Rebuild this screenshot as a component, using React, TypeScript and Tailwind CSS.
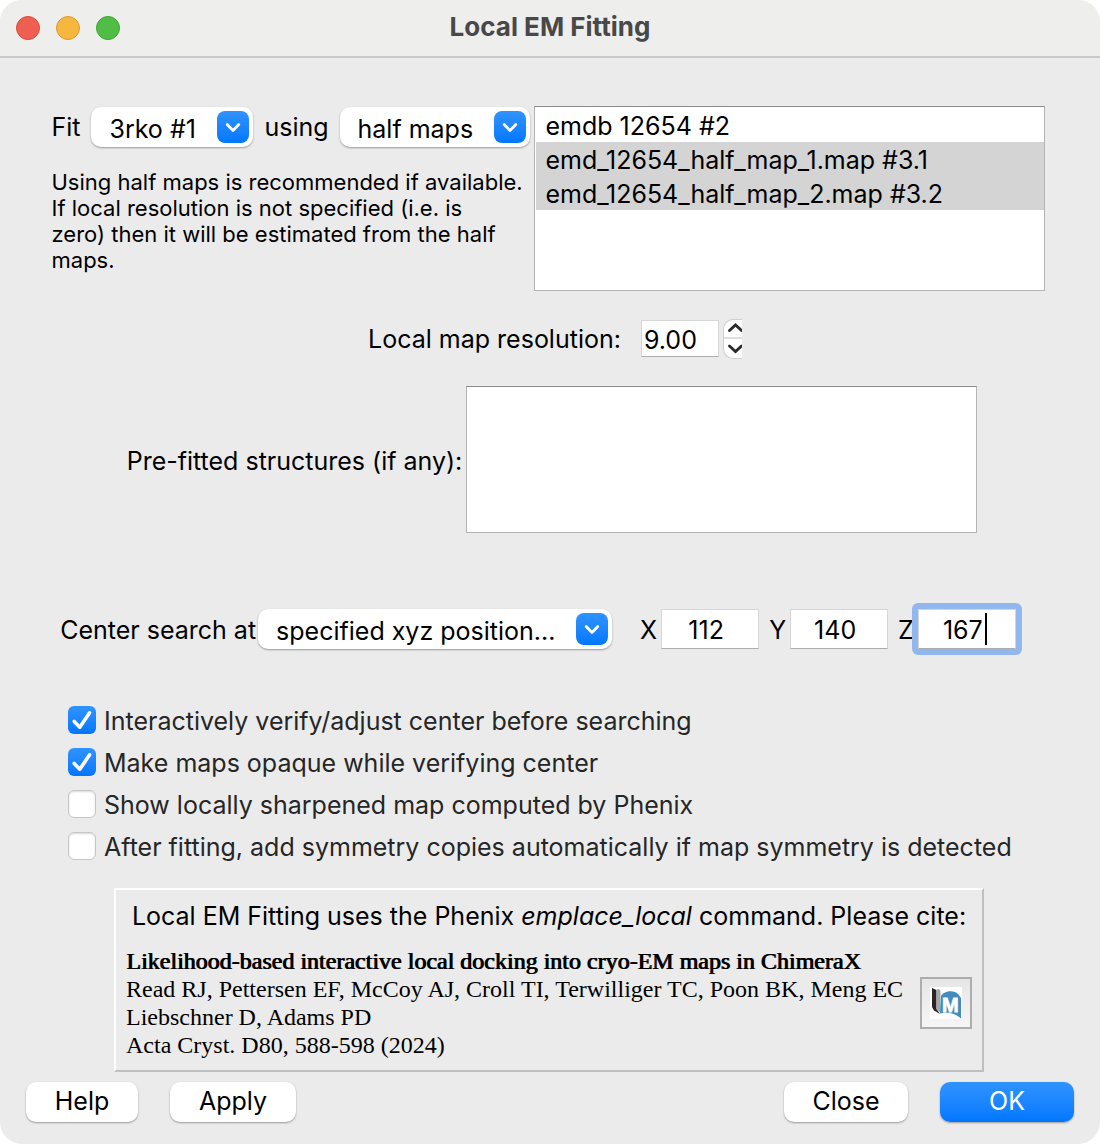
import { useState } from "react";
import type { ReactNode } from "react";

type PopupProps = {
  id: string;
  label: string;
  options: string[];
  className: string;
};

function PopupSelect({ id, label, options, className }: PopupProps) {
  return (
    <div className={`relative h-10 shrink-0 ${className}`}>
      <select
        id={id}
        aria-label={label}
        className="h-10 w-full appearance-none rounded-[10px] bg-white pt-1 pr-10 pl-[18px] text-black shadow-[0_1px_2px_rgba(0,0,0,0.35)] outline-none"
      >
        {options.map((option) => (
          <option key={option}>{option}</option>
        ))}
      </select>
      <span className="pointer-events-none absolute top-1 right-1 flex size-8 items-center justify-center rounded-lg bg-linear-to-b from-[#2f93ff] to-[#0077ff]">
        <svg width="16" height="16" viewBox="0 0 16 16" fill="none">
          <path d="M2.2 5.6 8 11.4 13.800 5.6" stroke="#fff" strokeWidth="2.8" strokeLinecap="round" strokeLinejoin="round" />
        </svg>
      </span>
    </div>
  );
}

type ButtonProps = {
  children: ReactNode;
  className: string;
};

function PushButton({ children, className }: ButtonProps) {
  return (
    <button
      type="button"
      className={`h-10 rounded-[10px] pb-[2px] shadow-[0_1px_2px_rgba(0,0,0,0.35)] ${className}`}
    >
      {children}
    </button>
  );
}

function CheckRow({ label, initial }: { label: string; initial: boolean }) {
  const [checked, setChecked] = useState(initial);

  return (
    <label className="flex h-[42px] items-center gap-2 text-[#262626]">
      <span className="relative size-7 shrink-0">
        <input
          type="checkbox"
          checked={checked}
          onChange={() => setChecked(!checked)}
          className="block size-7 appearance-none rounded-md border border-[#c6c6c6] bg-white shadow-[inset_0_1px_2px_rgba(0,0,0,0.15)] checked:border-0 checked:bg-linear-to-b checked:from-[#2f93ff] checked:to-[#0077ff] checked:shadow-none"
        />
        {checked && (
          <svg className="pointer-events-none absolute inset-0" width="28" height="28" viewBox="0 0 28 28" fill="none">
            <path d="M6.2 15.4 11.8 21.2 21.6 6.8" stroke="#fff" strokeWidth="3.6" strokeLinecap="round" strokeLinejoin="round" />
          </svg>
        )}
      </span>
      <span className="pt-[2px] whitespace-nowrap">{label}</span>
    </label>
  );
}

const coordClass =
  "h-10 w-[98px] border border-[#d6d6d6] border-b-[#adadad] bg-white pt-[2px] pr-2 text-center outline-none";

const maps = [
  "emdb 12654 #2",
  "emd_12654_half_map_1.map #3.1",
  "emd_12654_half_map_2.map #3.2",
];

const checks = [
  { label: "Interactively verify/adjust center before searching", initial: true },
  { label: "Make maps opaque while verifying center", initial: true },
  { label: "Show locally sharpened map computed by Phenix", initial: false },
  { label: "After fitting, add symmetry copies automatically if map symmetry is detected", initial: false },
];

function TitleBar() {
  return (
    <header className="relative flex h-[58px] items-center justify-center border-b-2 border-[#c9c9c8] bg-[#eeeeec] pb-[2px]">
      <div className="absolute top-4 left-4 flex gap-4">
        <button type="button" aria-label="Close window" className="size-6 rounded-full border border-[#d9493e] bg-[#ef5f50]" />
        <button type="button" aria-label="Minimize window" className="size-6 rounded-full border border-[#d79b35] bg-[#f7b63e]" />
        <button type="button" aria-label="Zoom window" className="size-6 rounded-full border border-[#3fa336] bg-[#50bd47]" />
      </div>
      <h1 className="text-[26px] font-bold text-[#484848]">Local EM Fitting</h1>
    </header>
  );
}

function CitationLogo() {
  return (
    <svg width="32" height="32" viewBox="0 0 32 32">
      <rect width="32" height="32" fill="#fff" />
      <path d="M2 1 6.5 3V22L10 27 4 23.500 2 20Z" fill="#2b2424" />
      <path d="M6.500 3C8 1 9.500 2 10.500 4V26L6.500 22Z" fill="#a8a5a4" />
      <path d="M10 26.500 11 9C14 3.500 24 2.500 28 7L31 11V31.500C26 26.500 17 24.500 10 26.500Z" fill="#438cbd" />
      <text x="12" y="25" fontFamily="Liberation Sans" fontSize="20" fontWeight="700" fill="#fff" stroke="#fff" strokeWidth="0.8">
        M
      </text>
    </svg>
  );
}

export default function App() {
  return (
    <div className="bg-white font-[Inter,sans-serif] text-[25px] leading-[34px] text-black">
      <div className="overflow-hidden rounded-[22px] bg-[#ebebeb]">
        <TitleBar />

        <main>
          <section className="flex items-start justify-center gap-1 pt-12 pr-1">
            <div className="w-[478px]">
              <div className="flex h-[42px] items-center justify-between">
                <label htmlFor="model">Fit</label>
                <PopupSelect id="model" label="Model to fit" options={["3rko #1"]} className="w-[162px]" />
                <label htmlFor="map-kind">using</label>
                <PopupSelect id="map-kind" label="Kind of map" options={["half maps"]} className="w-[190px]" />
              </div>
              <p className="mt-[21px] text-[22px] leading-[26px] whitespace-nowrap">
                Using half maps is recommended if available.
                <br />
                If local resolution is not specified (i.e. is
                <br />
                zero) then it will be estimated from the half
                <br />
                maps.
              </p>
            </div>
            <select
              multiple
              aria-label="Half maps"
              defaultValue={[maps[1], maps[2]]}
              className="h-[185px] w-[511px] shrink-0 overflow-hidden border border-[#b4b4b4] border-t-[#8c8c8c] bg-white pt-px pl-px outline-none"
            >
              {maps.map((map) => (
                <option
                  key={map}
                  className="h-[34px] px-[10px] pt-[3px] pb-0 leading-[31px] text-black checked:bg-[#d4d4d4] checked:bg-[linear-gradient(#d4d4d4,#d4d4d4)] checked:text-black"
                >
                  {map}
                </option>
              ))}
            </select>
          </section>

          <section className="flex h-[95px] items-center justify-center pl-[10px]">
            <label htmlFor="resolution">Local map resolution:</label>
            <input
              id="resolution"
              defaultValue="9.00"
              className="ml-5 h-[37px] w-[78px] border border-[#d6d6d6] border-b-[#adadad] bg-white pt-[2px] pl-[2px] outline-none"
            />
            <div className="ml-1 flex h-10 w-[19px] flex-col overflow-hidden rounded-l-[10px] border-y border-l border-[#cfcfcf] bg-white">
              <button type="button" aria-label="Increase" className="flex h-5 w-full items-center justify-end border-b-2 border-[#dedede]">
                <svg width="14" height="14" viewBox="0 0 14 14" fill="none">
                  <path d="M1.500 9.500 7.500 4 13.500 9.500" stroke="#2a2a2a" strokeWidth="2.800" strokeLinecap="round" />
                </svg>
              </button>
              <button type="button" aria-label="Decrease" className="flex h-5 w-full items-center justify-end">
                <svg width="14" height="14" viewBox="0 0 14 14" fill="none">
                  <path d="M1.500 5 7.500 10.500 13.500 5" stroke="#2a2a2a" strokeWidth="2.800" strokeLinecap="round" />
                </svg>
              </button>
            </div>
          </section>

          <section className="flex items-center justify-center gap-1 pl-1">
            <label htmlFor="structures" className="pt-[2px]">Pre-fitted structures (if any):</label>
            <select
              id="structures"
              multiple
              className="h-[147px] w-[511px] shrink-0 border border-[#b4b4b4] border-t-[#8c8c8c] bg-white outline-none"
            />
          </section>

          <section className="mt-[75px] flex h-[42px] items-center justify-center pr-6">
            <label htmlFor="center" className="pt-[2px] whitespace-nowrap">Center search at</label>
            <PopupSelect
              id="center"
              label="Center search at"
              options={["specified xyz position..."]}
              className="ml-[2px] w-[354px]"
            />
            <label htmlFor="x" className="ml-7 pt-[2px]">X</label>
            <input id="x" defaultValue="112" className={`ml-1 ${coordClass}`} />
            <label htmlFor="y" className="ml-[10px] pt-[2px]">Y</label>
            <input id="y" defaultValue="140" className={`ml-1 ${coordClass}`} />
            <label htmlFor="z" className="ml-[10px] pt-[2px]">Z</label>
            <div className="relative ml-1 rounded-xs ring-6 ring-[#91b7ee]">
              <input id="z" defaultValue="167" className={`block ${coordClass}`} />
              <span className="absolute top-1 left-[67px] h-8 w-[2px] bg-black" />
            </div>
          </section>

          <section className="mt-[49px] pl-[68px]">
            {checks.map((check) => (
              <CheckRow key={check.label} label={check.label} initial={check.initial} />
            ))}
          </section>

          <div className="mt-[21px] flex justify-center pr-[2px]">
            <section className="h-[184px] w-[870px] border-2 border-t-white border-r-[#bfbfbf] border-b-[#bfbfbf] border-l-white px-[10px] pt-[9px]">
              <p className="text-center">
                Local EM Fitting uses the Phenix <i>emplace_local</i> command. Please cite:
              </p>
              <div className="mt-[14px] flex items-center justify-between">
                <div className="font-['Liberation_Serif',serif] text-[24px] leading-[28px] whitespace-nowrap">
                  <p className="[text-shadow:1px_0_0_#000]">
                    Likelihood-based interactive local docking into cryo-EM maps in ChimeraX
                  </p>
                  <p>Read RJ, Pettersen EF, McCoy AJ, Croll TI, Terwilliger TC, Poon BK, Meng EC</p>
                  <p>Liebschner D, Adams PD</p>
                  <p>Acta Cryst. D80, 588-598 (2024)</p>
                </div>
                <button
                  type="button"
                  aria-label="Open citation"
                  className="flex size-[52px] shrink-0 items-center justify-center border-2 border-[#adadad] bg-linear-to-b from-[#e6e6e6] to-[#f6f6f6]"
                >
                  <CitationLogo />
                </button>
              </div>
            </section>
          </div>
        </main>

        <footer className="flex px-[26px] pt-[10px] pb-[22px]">
          <PushButton className="w-28 bg-white">Help</PushButton>
          <PushButton className="ml-8 w-[126px] bg-white">Apply</PushButton>
          <PushButton className="ml-auto w-[124px] bg-white">Close</PushButton>
          <PushButton className="ml-8 w-[134px] bg-linear-to-b from-[#2f93ff] to-[#0077ff] text-white">OK</PushButton>
        </footer>
      </div>
    </div>
  );
}
